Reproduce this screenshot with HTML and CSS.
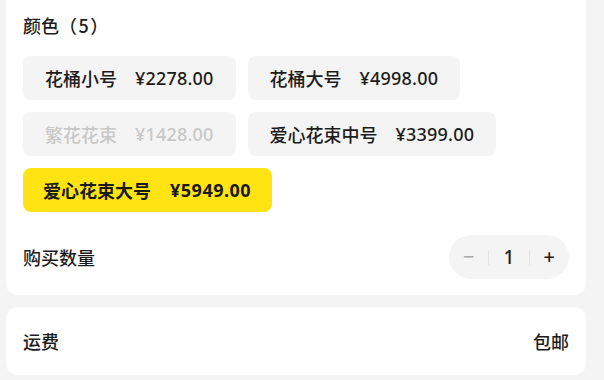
FILE: index.html
```html
<!DOCTYPE html>
<html lang="zh-CN">
<head>
<meta charset="utf-8">
<title>规格选择</title>
<link rel="stylesheet" href="styles.css">
</head>
<body>
<div class="page">
  <section class="card spec-card">
    <h2 class="title">颜色<span class="count">（5）</span></h2>
    <div class="chips">
      <div class="chip"><span class="name">花桶小号</span><span class="price">¥2278.00</span></div>
      <div class="chip"><span class="name">花桶大号</span><span class="price">¥4998.00</span></div>
      <div class="chip disabled"><span class="name">繁花花束</span><span class="price">¥1428.00</span></div>
      <div class="chip"><span class="name">爱心花束中号</span><span class="price">¥3399.00</span></div>
      <div class="chip selected"><span class="name">爱心花束大号</span><span class="price">¥5949.00</span></div>
    </div>
    <div class="qty-row">
      <span class="label">购买数量</span>
      <div class="stepper">
        <span class="step minus">−</span>
        <span class="divider"></span>
        <span class="step value">1</span>
        <span class="divider"></span>
        <span class="step plus">+</span>
      </div>
    </div>
  </section>
  <section class="card ship-card">
    <span class="label">运费</span>
    <span class="ship-value">包邮</span>
  </section>
</div>
</body>
</html>
```
FILE: styles.css
```css
* { box-sizing: border-box; }
html, body {
  margin: 0;
  padding: 0;
  background: #f4f4f4;
}
body {
  width: 604px;
  height: 380px;
  overflow: hidden;
  font-family: "Noto Sans CJK SC", "Noto Sans", sans-serif;
  color: #1c1c1c;
}
.page {
  padding: 0 18px 0 6px;
  display: flex;
  flex-direction: column;
  gap: 12px;
}
.card {
  background: #fff;
  border-radius: 12px;
}
.spec-card {
  border-radius: 0 0 12px 12px;
  padding: 12px 17px 16px 17px;
}
.title {
  margin: 0 0 18px 0;
  font-size: 18px;
  font-weight: 500;
  line-height: 26px;
}
.count {
  letter-spacing: 1.5px;
}
.chips {
  display: flex;
  flex-wrap: wrap;
  gap: 12px 12px;
}
.chip {
  height: 44px;
  padding: 0 22px;
  border-radius: 8px;
  background: #f4f4f4;
  display: flex;
  align-items: center;
  gap: 18px;
  font-size: 18px;
  font-weight: 500;
  line-height: 1;
  color: #1c1c1c;
}
.price {
  font-family: "Noto Sans", "Noto Sans CJK SC", sans-serif;
  letter-spacing: 0.2px;
}
.chip.disabled { color: #c8c8c8; }
.chip.selected {
  background: #ffe411;
  font-weight: 700;
  padding: 0 21px 0 20px;
  gap: 19px;
  color: #1a1a1a;
}
.chip.selected .price {
  letter-spacing: 0.5px;
}
.qty-row {
  margin-top: 23px;
  display: flex;
  align-items: center;
  justify-content: space-between;
}
.label {
  font-size: 18px;
  font-weight: 500;
  line-height: 26px;
}
.stepper {
  width: 120px;
  height: 44px;
  border-radius: 22px;
  background: #f4f4f4;
  display: flex;
  align-items: center;
}
.step {
  flex: 1;
  text-align: center;
  font-family: "Noto Sans", sans-serif;
  font-size: 20px;
  line-height: 44px;
}
.minus { color: #a8a8a8; }
.value { font-size: 19px; font-weight: 500; color: #1c1c1c; }
.plus { color: #1c1c1c; font-weight: 500; }
.divider {
  width: 1px;
  height: 15px;
  background: #e4e4e4;
}
.ship-card {
  height: 68px;
  padding: 0 17px;
  display: flex;
  align-items: center;
  justify-content: space-between;
}
.ship-value {
  font-size: 18px;
  font-weight: 500;
  line-height: 26px;
}
```
